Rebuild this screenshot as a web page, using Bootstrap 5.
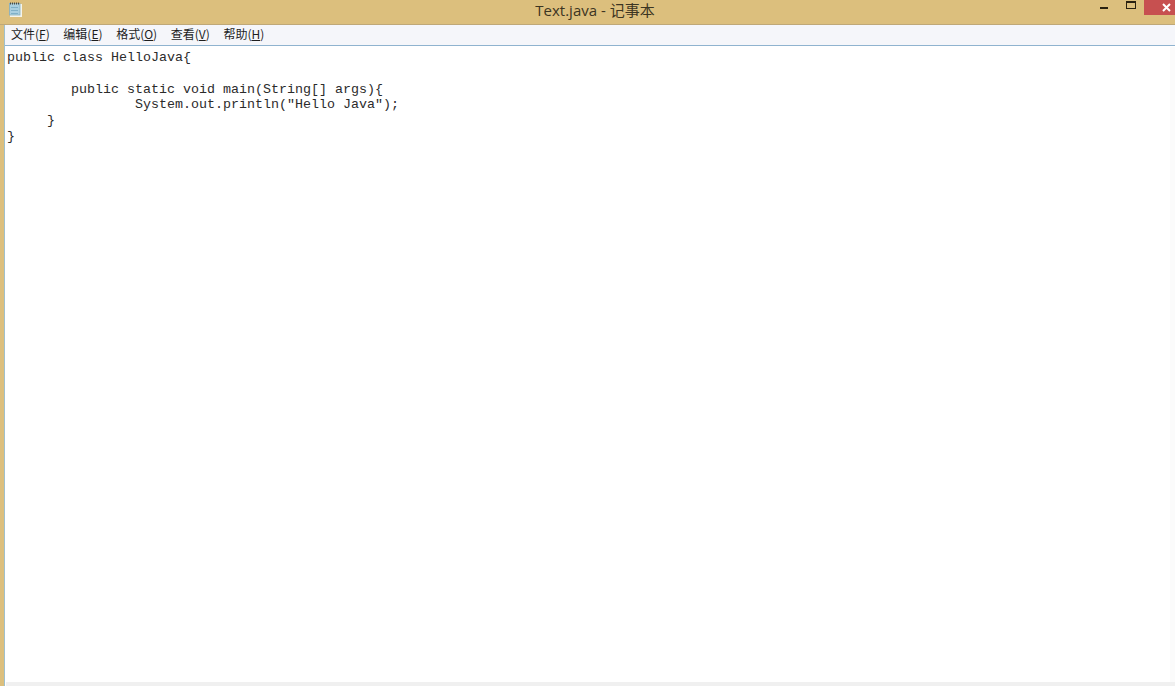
<!DOCTYPE html>
<html lang="zh">
<head>
<meta charset="utf-8">
<title>Text.java - 记事本</title>
<link href="https://cdn.jsdelivr.net/npm/bootstrap@5.3.0/dist/css/bootstrap.min.css" rel="stylesheet">
<style>
html,body{height:100%;margin:0;overflow:hidden;background:#dcbf7d}
.win-frame{width:1175px;height:686px;background:#dcbf7d}
.title-bar{height:25px;background:#dcbf7d;border-bottom:1px solid #bfa878;position:relative}
.title-text{font:15px/20px "Open Sans","Noto Sans CJK SC",sans-serif;color:#3c3522;padding-left:15px}
.app-icon{position:absolute;left:7px;top:0}
.ctl-min{position:absolute;right:67px;top:7px;width:8px;height:2px;background:#2a2110}
.ctl-max{position:absolute;right:39px;top:1px;width:10px;height:8px;border:1px solid #2a2110;border-top-width:2px}
.ctl-close{position:absolute;right:0;top:0;width:31px;height:15px;background:#c75050;padding-right:4px}
.client-area{margin-left:4px;height:661px;border-left:1px solid #9fc0cc;background:#fff;position:relative}
.menu-strip{height:21px;background:#f5f6fa;border-bottom:1px solid #8fb3cf;padding-left:6px;font:12px/18px "Noto Sans CJK SC","Liberation Sans",sans-serif;color:#1e1e1e}
.menu-item{white-space:nowrap;margin-right:13.6px}
.menu-item u{text-underline-offset:1px}
.code-area{margin:0;padding:4px 0 0 2px;font:13.33px/15.75px "Liberation Mono",monospace;color:#2b2b2b;background:#fff;height:636px;overflow:hidden}
.scroll-h{height:4px;background:#f0f0f0;margin-left:1px}
.scroll-v{position:absolute;right:0;top:22px;width:5px;height:635px;background:#fbfbfb}
</style>
</head>
<body>
<div class="win-frame position-relative">
  <div class="title-bar d-flex align-items-start justify-content-center">
    <svg class="app-icon" width="16" height="18" viewBox="0 0 16 18" aria-hidden="true">
      <rect x="3" y="4" width="12" height="13" fill="#f4f4ec"/>
      <rect x="2.5" y="3.5" width="10.5" height="11.5" fill="#a9cfe0" stroke="#86aebf" stroke-width=".8"/>
      <rect x="4" y="7" width="7" height="1" fill="#7fb0c8"/><rect x="4" y="10" width="7" height="1" fill="#7fb0c8"/><rect x="4" y="13" width="7" height="1" fill="#7fb0c8"/>
      <path d="M3 3.5h10" stroke="#4b4b45" stroke-width="2" stroke-dasharray="1 1"/>
    </svg>
    <div class="title-text">Text.java - 记事本</div>
    <div class="ctl-min"></div>
    <div class="ctl-max"></div>
    <div class="ctl-close d-flex align-items-center justify-content-end">
      <svg width="9" height="9" viewBox="0 0 9 9" aria-hidden="true"><path d="M1 1l7 7M8 1l-7 7" stroke="#fff" stroke-width="2"/></svg>
    </div>
  </div>
  <div class="client-area">
    <div class="menu-strip d-flex">
      <span class="menu-item">文件(<u>F</u>)</span><span class="menu-item">编辑(<u>E</u>)</span><span class="menu-item">格式(<u>O</u>)</span><span class="menu-item">查看(<u>V</u>)</span><span class="menu-item">帮助(<u>H</u>)</span>
    </div>
    <pre class="code-area">public class HelloJava{

        public static void main(String[] args){
                System.out.println("Hello Java");
     }
}</pre>
    <div class="scroll-h"></div>
    <div class="scroll-v"></div>
  </div>
</div>
</body>
</html>
